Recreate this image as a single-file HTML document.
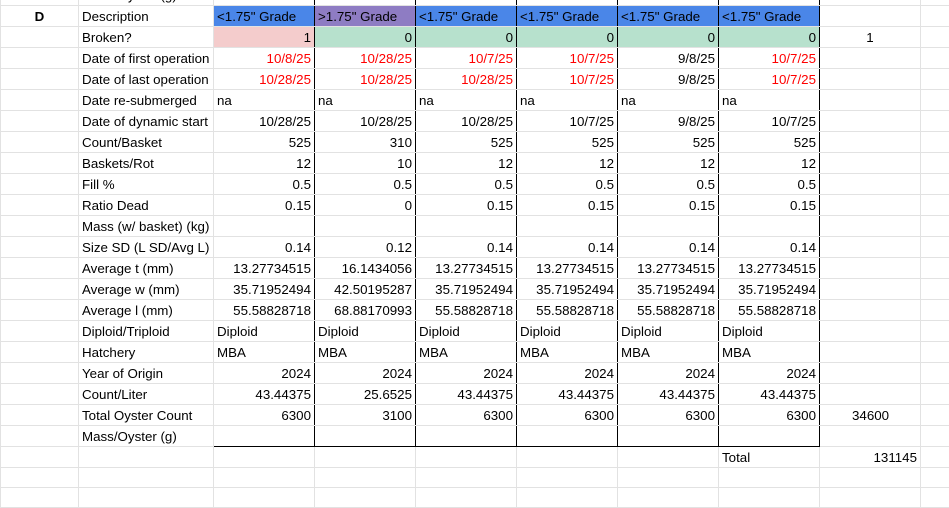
<!DOCTYPE html><html><head><style>
body{margin:0;width:949px;height:495px;overflow:hidden;background:#fff;font-family:"Liberation Sans",Arial,sans-serif;font-size:13.33px;position:relative}
table{border-collapse:collapse;table-layout:fixed;position:absolute;left:0;top:-16px;width:960px}
td{border:1px solid #e2e2e2;height:20px;padding:0;white-space:nowrap;overflow:hidden;line-height:20px;vertical-align:bottom;}
td>*,td{box-sizing:border-box}
td div{padding:0 3px;overflow:hidden;position:relative;top:1px}
td.d{border-left:1px solid #000;border-right:1px solid #000;text-align:right}
td.l{text-align:left}
tr.last td.d{border-bottom:1px solid #000}
.r{color:#f00}
.b{background:#4a86e8;text-align:left!important}
.p{background:#8e7cc3;text-align:left!important}
.pk{background:#f4cccc}.g{background:#b7e1cd}
</style></head><body>
<table>
<colgroup><col style="width:78px"><col style="width:135px"><col style="width:101px"><col style="width:101px"><col style="width:101px"><col style="width:101px"><col style="width:101px"><col style="width:101px"><col style="width:101px"><col style="width:40px"></colgroup>
<tr><td></td><td><div>Mass/Oyster (g)</div></td><td class="d"></td><td class="d"></td><td class="d"></td><td class="d"></td><td class="d"></td><td class="d"></td><td></td><td></td></tr>
<tr><td style="text-align:center;font-weight:bold"><div>D</div></td><td><div>Description</div></td><td class="d b"><div>&lt;1.75" Grade</div></td><td class="d p"><div>&gt;1.75" Grade</div></td><td class="d b"><div>&lt;1.75" Grade</div></td><td class="d b"><div>&lt;1.75" Grade</div></td><td class="d b"><div>&lt;1.75" Grade</div></td><td class="d b"><div>&lt;1.75" Grade</div></td><td></td><td></td></tr>
<tr><td></td><td><div>Broken?</div></td><td class="d pk"><div>1</div></td><td class="d g"><div>0</div></td><td class="d g"><div>0</div></td><td class="d g"><div>0</div></td><td class="d g"><div>0</div></td><td class="d g"><div>0</div></td><td style="text-align:center"><div>1</div></td><td></td></tr>
<tr><td></td><td><div>Date of first operation</div></td><td class="d r"><div>10/8/25</div></td><td class="d r"><div>10/28/25</div></td><td class="d r"><div>10/7/25</div></td><td class="d r"><div>10/7/25</div></td><td class="d"><div>9/8/25</div></td><td class="d r"><div>10/7/25</div></td><td></td><td></td></tr>
<tr><td></td><td><div>Date of last operation</div></td><td class="d r"><div>10/28/25</div></td><td class="d r"><div>10/28/25</div></td><td class="d r"><div>10/28/25</div></td><td class="d r"><div>10/7/25</div></td><td class="d"><div>9/8/25</div></td><td class="d r"><div>10/7/25</div></td><td></td><td></td></tr>
<tr><td></td><td><div>Date re-submerged</div></td><td class="d l"><div>na</div></td><td class="d l"><div>na</div></td><td class="d l"><div>na</div></td><td class="d l"><div>na</div></td><td class="d l"><div>na</div></td><td class="d l"><div>na</div></td><td></td><td></td></tr>
<tr><td></td><td><div>Date of dynamic start</div></td><td class="d"><div>10/28/25</div></td><td class="d"><div>10/28/25</div></td><td class="d"><div>10/28/25</div></td><td class="d"><div>10/7/25</div></td><td class="d"><div>9/8/25</div></td><td class="d"><div>10/7/25</div></td><td></td><td></td></tr>
<tr><td></td><td><div>Count/Basket</div></td><td class="d"><div>525</div></td><td class="d"><div>310</div></td><td class="d"><div>525</div></td><td class="d"><div>525</div></td><td class="d"><div>525</div></td><td class="d"><div>525</div></td><td></td><td></td></tr>
<tr><td></td><td><div>Baskets/Rot</div></td><td class="d"><div>12</div></td><td class="d"><div>10</div></td><td class="d"><div>12</div></td><td class="d"><div>12</div></td><td class="d"><div>12</div></td><td class="d"><div>12</div></td><td></td><td></td></tr>
<tr><td></td><td><div>Fill %</div></td><td class="d"><div>0.5</div></td><td class="d"><div>0.5</div></td><td class="d"><div>0.5</div></td><td class="d"><div>0.5</div></td><td class="d"><div>0.5</div></td><td class="d"><div>0.5</div></td><td></td><td></td></tr>
<tr><td></td><td><div>Ratio Dead</div></td><td class="d"><div>0.15</div></td><td class="d"><div>0</div></td><td class="d"><div>0.15</div></td><td class="d"><div>0.15</div></td><td class="d"><div>0.15</div></td><td class="d"><div>0.15</div></td><td></td><td></td></tr>
<tr><td></td><td><div>Mass (w/ basket) (kg)</div></td><td class="d"></td><td class="d"></td><td class="d"></td><td class="d"></td><td class="d"></td><td class="d"></td><td></td><td></td></tr>
<tr><td></td><td><div>Size SD (L SD/Avg L)</div></td><td class="d"><div>0.14</div></td><td class="d"><div>0.12</div></td><td class="d"><div>0.14</div></td><td class="d"><div>0.14</div></td><td class="d"><div>0.14</div></td><td class="d"><div>0.14</div></td><td></td><td></td></tr>
<tr><td></td><td><div>Average t (mm)</div></td><td class="d"><div>13.27734515</div></td><td class="d"><div>16.1434056</div></td><td class="d"><div>13.27734515</div></td><td class="d"><div>13.27734515</div></td><td class="d"><div>13.27734515</div></td><td class="d"><div>13.27734515</div></td><td></td><td></td></tr>
<tr><td></td><td><div>Average w (mm)</div></td><td class="d"><div>35.71952494</div></td><td class="d"><div>42.50195287</div></td><td class="d"><div>35.71952494</div></td><td class="d"><div>35.71952494</div></td><td class="d"><div>35.71952494</div></td><td class="d"><div>35.71952494</div></td><td></td><td></td></tr>
<tr><td></td><td><div>Average l (mm)</div></td><td class="d"><div>55.58828718</div></td><td class="d"><div>68.88170993</div></td><td class="d"><div>55.58828718</div></td><td class="d"><div>55.58828718</div></td><td class="d"><div>55.58828718</div></td><td class="d"><div>55.58828718</div></td><td></td><td></td></tr>
<tr><td></td><td><div>Diploid/Triploid</div></td><td class="d l"><div>Diploid</div></td><td class="d l"><div>Diploid</div></td><td class="d l"><div>Diploid</div></td><td class="d l"><div>Diploid</div></td><td class="d l"><div>Diploid</div></td><td class="d l"><div>Diploid</div></td><td></td><td></td></tr>
<tr><td></td><td><div>Hatchery</div></td><td class="d l"><div>MBA</div></td><td class="d l"><div>MBA</div></td><td class="d l"><div>MBA</div></td><td class="d l"><div>MBA</div></td><td class="d l"><div>MBA</div></td><td class="d l"><div>MBA</div></td><td></td><td></td></tr>
<tr><td></td><td><div>Year of Origin</div></td><td class="d"><div>2024</div></td><td class="d"><div>2024</div></td><td class="d"><div>2024</div></td><td class="d"><div>2024</div></td><td class="d"><div>2024</div></td><td class="d"><div>2024</div></td><td></td><td></td></tr>
<tr><td></td><td><div>Count/Liter</div></td><td class="d"><div>43.44375</div></td><td class="d"><div>25.6525</div></td><td class="d"><div>43.44375</div></td><td class="d"><div>43.44375</div></td><td class="d"><div>43.44375</div></td><td class="d"><div>43.44375</div></td><td></td><td></td></tr>
<tr><td></td><td><div>Total Oyster Count</div></td><td class="d"><div>6300</div></td><td class="d"><div>3100</div></td><td class="d"><div>6300</div></td><td class="d"><div>6300</div></td><td class="d"><div>6300</div></td><td class="d"><div>6300</div></td><td><div style="padding-left:32px">34600</div></td><td></td></tr>
<tr class="last"><td></td><td><div>Mass/Oyster (g)</div></td><td class="d"></td><td class="d"></td><td class="d"></td><td class="d"></td><td class="d"></td><td class="d"></td><td></td><td></td></tr>
<tr><td></td><td></td><td></td><td></td><td></td><td></td><td></td><td><div>Total</div></td><td style="text-align:right"><div>131145</div></td><td></td></tr>
<tr><td></td><td></td><td></td><td></td><td></td><td></td><td></td><td></td><td></td><td></td></tr>
<tr><td></td><td></td><td></td><td></td><td></td><td></td><td></td><td></td><td></td><td></td></tr>
</table>
</body></html>
